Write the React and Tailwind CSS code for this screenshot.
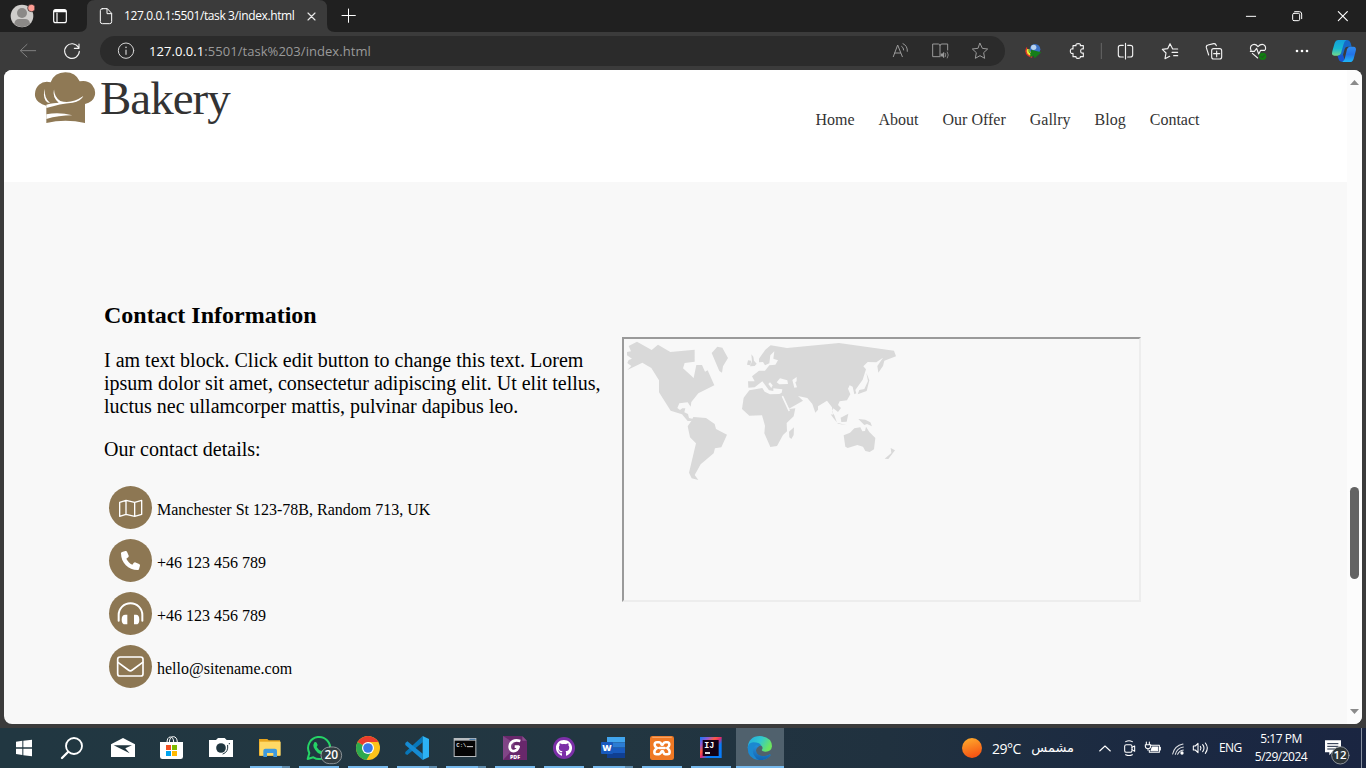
import React from "react";
import { FaPhone, FaGithub } from "react-icons/fa6";

const Pic = ({ box, children, className = "" }) => {
  const [x, y, w, h] = box;
  return (
    <svg className={`shrink-0 ${className}`} width={w / 3} height={h / 3} viewBox={`${x} ${y} ${w} ${h}`} fill="none" strokeLinecap="round" strokeLinejoin="round">
      {children}
    </svg>
  );
};

function TabBar() {
  return (
    <div className="flex h-8 shrink-0 bg-[#202020]">
      <Pic box={[0, 0, 237, 96]}>
        <circle cx="66" cy="48" r="34" fill="#cfcdcb" />
        <circle cx="66" cy="39" r="15" fill="#8b8987" />
        <path d="M43 72 Q44 57 58 57 H75 Q89 57 90 72 Q66 92 43 72Z" fill="#8b8987" />
        <circle cx="94" cy="24" r="11" fill="#ff9d94" stroke="#202020" strokeWidth="2" />
        <rect x="161" y="29" width="38" height="39" rx="6" stroke="#fff" strokeWidth="3.5" />
        <path d="M161 34 Q161 29 166 29 H194 Q199 29 199 35 V37 H161Z" fill="#fff" />
        <path d="M171 39 V67" stroke="#fff" strokeWidth="3.5" />
      </Pic>
      <Pic box={[237, 0, 135, 96]}>
        <path d="M237 96 Q261 96 261 72 V24 Q261 0 285 0 H372 V96Z" fill="#3b3b3b" />
        <path d="M307 26 H322 L335 40 V65 Q335 71 329 71 H307 Q301 71 301 65 V32 Q301 26 307 26Z M321 27 V41 H334" stroke="#fff" strokeWidth="3" />
      </Pic>
      <div className="flex w-[176px] items-center whitespace-nowrap bg-[#3b3b3b] font-['Open_Sans',sans-serif] text-[12px] tracking-[-0.38px] text-white">
        127.0.0.1:5501/task 3/index.html
      </div>
      <Pic box={[900, 0, 240, 96]}>
        <path d="M900 0 H957 Q981 0 981 24 V72 Q981 96 1005 96 H900Z" fill="#3b3b3b" />
        <path d="M924 39 L945 60 M945 39 L924 60" stroke="#e8e8e8" strokeWidth="3.500" />
        <path d="M1026 46.500 H1066 M1045.500 27 V67" stroke="#fff" strokeWidth="3" />
      </Pic>
      <div className="flex-1" />
      <Pic box={[1140, 0, 378, 96]}>
        <path d="M1159 49 H1187" stroke="#fff" strokeWidth="3" />
        <rect x="1298" y="40" width="21" height="22" rx="4" stroke="#fff" strokeWidth="3" />
        <path d="M1304 35 H1318 Q1325 35 1325 42 V56" stroke="#fff" strokeWidth="3" />
        <path d="M1435 35 L1462 62 M1462 35 L1435 62" stroke="#fff" strokeWidth="3.500" />
      </Pic>
    </div>
  );
}

function Toolbar() {
  return (
    <div className="flex h-[38px] shrink-0 bg-[#3b3b3b]">
      <Pic box={[0, 96, 300, 114]}>
        <path d="M107 152 H62 M81 133 L61 152 L81 171" stroke="#808080" strokeWidth="3" />
        <path d="M235 142 A22 22 0 1 0 238 154 M237 132 V145 H223" stroke="#f4f4f4" strokeWidth="3.4" />
      </Pic>
      <div className="mt-1 flex h-[30px] w-[905px] items-center rounded-full bg-[#2b2b2b]">
        <Pic box={[300, 109, 147, 90]}>
          <circle cx="378" cy="153" r="23" stroke="#d6d6d6" strokeWidth="3" />
          <path d="M378 151 V164" stroke="#d6d6d6" strokeWidth="3.5" />
          <circle cx="378" cy="143" r="2.4" fill="#d6d6d6" />
        </Pic>
        <div className="flex-1 whitespace-nowrap pt-px font-['Open_Sans',sans-serif] text-[13px] tracking-[0.05px] text-[#9a9a9a]">
          <span className="text-white">127.0.0.1</span>:5501/task%203/index.html
        </div>
        <Pic box={[75, 109, 360, 90]}>
          <g stroke="#9a9a9a" strokeWidth="3">
            <path d="M100 171 L113 136 L127 171 M104 160 H122 M125 140 Q131 143 131 151 M129 132 Q143 138 142 155" />
            <path d="M240 171 H218 V133 H235 Q240 133 240 138 Q240 133 246 133 H263 V151 M240 138 V168" />
            <path d="M243 162 H247 L252 157 V175 L247 170 H243Z" fill="#9a9a9a" strokeWidth="1" />
            <path d="M256 161 Q259 165 256 171 M262 157 Q268 166 262 175" strokeWidth="2.4" />
            <path d="M360 131 L367 146 L383 148 L371 159 L374 176 L360 168 L346 176 L349 159 L337 148 L353 146Z" />
          </g>
        </Pic>
      </div>
      <Pic box={[435, 96, 1083, 114]}>
        <path d="M498 146 A19 19 0 0 0 516 170 L518 150Z" fill="#eee535" />
        <path d="M500 144 Q492 164 515 171" stroke="#e53427" strokeWidth="4" />
        <path d="M507 150 Q506 160 516 163" stroke="#18902d" strokeWidth="3" />
        <circle cx="525" cy="148" r="16" fill="#3b70c4" />
        <circle cx="521" cy="142" r="8" fill="#b7d2ef" />
        <path d="M513 149 L544 157 L524 175 L521 167 L510 171Z" fill="#167d1a" />
        <g stroke="#f2f2f2" strokeWidth="3.4">
          <path d="M639 137 H648 Q646 131 655 131 Q663 131 661 137 H670 V147 Q662 145 662 153 Q662 161 670 159 V170 H661 Q662 175 655 175 Q647 175 648 170 H639 V160 Q631 162 631 153 Q631 145 639 147Z" />
          <path d="M724 130 V176" stroke="#666" strokeWidth="3" />
          <path d="M790 136 H782 Q775 136 775 142 V165 Q775 171 782 171 H790 M803 136 H811 Q818 136 818 142 V165 Q818 171 811 171 H803 M796.500 130 V177" />
          <path d="M938 147 L930 131 L923 146 L907 148 L918 159 L915 176 L929 169 M938 147 H953 M936 157 H953 M941 167 H953" />
          <path d="M1046 165 L1039 143 Q1038 136 1044 135 L1061 131 Q1067 130 1069 137" />
          <rect x="1055" y="146" width="30" height="31" rx="6" /><path d="M1070 153 V170 M1061 161 H1079" />
          <path d="M1173 151 Q1168 139 1178 134 Q1187 131 1194 140 Q1202 131 1211 134 Q1219 139 1216 149 M1177 160 L1193 174 M1171 154 H1183 L1190 145 L1196 162 L1202 151 H1214" />
        </g>
        <circle cx="1208" cy="169" r="11" fill="#107c10" /><path d="M1203 169 L1207 173 L1213 166" stroke="#333" strokeWidth="2" />
        <g fill="#fff"><circle cx="1311" cy="153" r="4" /><circle cx="1326" cy="153" r="4" /><circle cx="1341" cy="153" r="4" /></g>
        <defs>
          <linearGradient id="cpA" x1="0" y1="0" x2="0" y2="1"><stop stopColor="#139fda" /><stop offset=".55" stopColor="#18b9d1" /><stop offset="1" stopColor="#72d98a" /></linearGradient>
          <linearGradient id="cpB" x1="0" y1="0" x2="0" y2="1"><stop stopColor="#2f8cf0" /><stop offset=".5" stopColor="#2373e8" /><stop offset="1" stopColor="#1eb5f5" /></linearGradient>
        </defs>
        <path d="M1449 120 H1462 Q1469 120 1472 129 L1475 140 H1463 Q1456 140 1454 147 L1448 168 H1437 L1446 129Z" fill="#1669c8" />
        <path d="M1432 166 H1450 L1455 186 H1449 Q1438 186 1436 178Z" fill="#1654cf" />
        <path d="M1434 120 H1459 Q1453 123 1451 132 L1443 160 Q1440 167 1432 167 H1423 Q1413 167 1417 154 L1424 129 Q1427 120 1434 120Z" fill="url(#cpA)" />
        <path d="M1470 140 H1480 Q1491 140 1487 154 L1481 176 Q1478 186 1470 186 H1447 Q1453 182 1455 173 L1461 148 Q1463 140 1470 140Z" fill="url(#cpB)" />
      </Pic>
    </div>
  );
}

function Logo() {
  return (
    <div className="flex">
      <Pic box={[102, 213, 198, 162]}>
        <path d="M152 247 Q163 217 196 217 Q227 217 239 244 Q262 239 276 254 Q289 270 284 288 Q279 306 255 312 V369 Q196 356 139 369 V317 Q111 310 106 292 Q101 270 117 254 Q131 242 152 247Z" fill="#8f7955" />
        <path d="M134 266 Q132 293 150 309 Q142 309 137 302 Q128 288 134 266Z M162 268 Q163 292 181 303 Q214 313 250 288 Q243 304 218 308 Q180 311 139 324 V314 Q150 311 160 310 Q168 309 176 308 Q156 292 162 268Z M139 343 Q178 336 217 346 Q176 346 139 357Z" fill="#fff" />
      </Pic>
      <div className="h-14 whitespace-nowrap font-['Liberation_Serif',serif] text-[47px] leading-[54px] tracking-[-1px] text-[#333]">Bakery</div>
    </div>
  );
}

function WorldMap() {
  return (
    <Pic box={[27, 27, 873, 453]}>
      <g fill="#d9d9d9">
        <path d="M66 35 L110 60 L129 44 L166 66 L239 59 V95 L209 99 L204 115 L236 144 L244 105 H261 L270 125 L278 121 L298 166 L250 190 L229 216 L227 230 L218 217 L193 220 L187 234 L195 240 L202 235 L211 235 L208 247 L219 252 L222 264 L235 267 L229 273 L218 273 L201 253 L167 242 L132 187 V151 L109 114 L82 98 L37 120 L49 108 L37 99 L41 90 L51 86 L36 76 V66 L48 64 L41 48Z" />
        <path d="M235 261 L273 264 L299 282 L303 297 L336 314 L319 352 L300 355 L296 370 L257 403 L239 435 L250 450 L230 445 L222 428 L243 340 L225 322 L218 289 L229 273Z" />
        <path d="M307 50 L322 53 L339 84 L324 109 L321 128 L313 123 L290 69Z" />
        <path d="M409 73 L415 80 L417 92 L425 101 L419 108 L405 109 L411 94Z M399 91 L409 92 L406 106 L396 104Z" />
        <path d="M432 86 L451 59 L467 46 L516 54 L672 39 L837 62 L843 79 L808 92 L804 108 L790 128 L787 108 L804 83 L784 97 L758 96 L745 109 L753 118 L743 149 L728 170 L721 180 L724 190 L718 193 L713 170 L704 166 L699 176 L706 193 L696 211 L674 214 L669 225 L678 234 L669 246 L655 235 L651 246 L658 256 L666 278 L696 286 L669 281 L655 264 L647 253 L654 254 L651 232 L636 212 L609 229 V239 L601 248 L592 222 L577 204 L549 198 L564 212 L522 236 L504 200 L522 237 L541 235 L536 259 L515 279 L516 304 L504 315 L486 348 L466 351 L448 310 L450 287 L441 256 L403 257 L381 237 L386 203 L403 181 L442 174 L449 185 L465 193 L493 192 L500 188 L502 178 L475 175 L475 183 L462 181 L442 154 L419 172 L400 173 L399 154 L419 154 L411 139 L432 122 H450 L463 106 L481 104 L489 91 L475 86 L478 64 L466 76 L463 100 L450 106 L444 96 L432 97Z" />
        <path d="M522 305 L537 292 L536 315 L529 327 L523 322Z M677 263 L700 251 L695 275 L679 276Z M730 267 L751 269 L766 277 L771 289 L756 282 L748 285Z" />
        <path d="M686 316 L705 308 L718 295 L736 292 L742 304 L750 303 L753 290 L763 306 L781 324 L777 358 L764 366 L751 363 L744 350 L727 345 L698 354 L691 350Z M827 354 L840 361 L820 387 L809 386 L829 369Z M754 128 L763 151 L755 183 L728 193 L733 180 L748 177 L759 153Z" />
      </g>
      <path d="M485 157 L495 145 L517 151 L519 162 L493 163Z M532 150 L545 141 V154 L541 157 L546 172 L538 173Z M465 157 L473 166 L469 174 L460 162Z" fill="#f8f8f8" />
      <path d="M503 200 L522 241" stroke="#f8f8f8" strokeWidth="5" />
    </Pic>
  );
}

const contacts = [
  ["Manchester St 123-78B, Random 713, UK", "map"],
  ["+46 123 456 789", "phone"],
  ["+46 123 456 789", "headphones"],
  ["hello@sitename.com", "mail"],
];

function ContactIcon({ kind }) {
  return (
    <div className="flex size-[43px] items-center justify-center rounded-full bg-[#8d7753] text-white">
      {kind === "map" && <Pic box={[57, 33, 129, 129]}><path d="M89 82 L108 76 L134 82 L155 76 V118 L134 124 L108 118 L89 124Z M108 76 V118 M134 82 V124" stroke="#fff" strokeWidth="4" /></Pic>}
      {kind === "phone" && <FaPhone className="size-[19px]" />}
      {kind === "headphones" && <Pic box={[57, 351, 129, 129]}><path d="M86 437 V420 A35.500 35.500 0 0 1 157 420 V437" stroke="#fff" strokeWidth="6" /><path d="M112 419 V448 H106 Q95 448 95 434 Q95 419 106 419Z M132 419 V448 H138 Q148 448 148 434 Q148 419 138 419Z" fill="#fff" /></Pic>}
      {kind === "mail" && <Pic box={[57, 510, 129, 129]}><rect x="83" y="546" width="76" height="57" rx="7" stroke="#fff" strokeWidth="5" /><path d="M84 562 L115 585 Q121 590 127 585 L158 562" stroke="#fff" strokeWidth="5" /></Pic>}
    </div>
  );
}

function Page() {
  return (
    <div className="flex h-[658px] shrink-0 bg-[#3b3b3b] px-1 pb-1">
      <div className="flex flex-1 overflow-hidden rounded-lg bg-[#f8f8f8]">
        <div className="flex w-[1343px] flex-col font-['Liberation_Serif',serif]">
          <header className="flex h-28 shrink-0 justify-between bg-white pl-[30px] pr-[147.5px] pt-px">
            <Logo />
            <nav className="flex gap-6 pt-10 text-[16px] leading-[18px] text-[#333]">
              {["Home", "About", "Our Offer", "Gallry", "Blog", "Contact"].map((t) => <a key={t}>{t}</a>)}
            </nav>
          </header>
          <main className="flex pl-[100px]">
            <section className="w-[518px] whitespace-nowrap pt-[120px] text-[20px] leading-[23px] text-black">
              <h2 className="text-[24px] font-bold leading-[27px]">Contact Information</h2>
              <p className="pt-5">
                I am text block. Click edit button to change this text. Lorem<br />
                ipsum dolor sit amet, consectetur adipiscing elit. Ut elit tellus,<br />
                luctus nec ullamcorper mattis, pulvinar dapibus leo.
              </p>
              <p className="pt-5">Our contact details:</p>
              <ul className="flex flex-col gap-[10px] pl-[5px] pt-[25px] text-[16px]">
                {contacts.map(([text, kind], i) => (
                  <li key={i} className="flex items-center gap-[5px]"><ContactIcon kind={kind} /><span className="pt-[3px]">{text}</span></li>
                ))}
              </ul>
            </section>
            <div className="mt-[155px] h-[265px] w-[519px] border-2 border-b-[#ededed] border-l-[#9a9a9a] border-r-[#ededed] border-t-[#9a9a9a]">
              <WorldMap />
            </div>
          </main>
        </div>
        <div className="flex w-[15px] flex-col items-center bg-[#fcfcfc]">
          <svg className="mt-2.5" width="15" height="5" viewBox="0 0 15 5"><path d="M3 5 L7.500 0 L12 5Z" fill="#8b8b8b" /></svg>
          <div className="mt-[402px] h-[92px] w-[9px] rounded-full bg-[#636363]" />
          <div className="flex-1" />
          <svg className="mb-2.5" width="15" height="5" viewBox="0 0 15 5"><path d="M3 0 L7.500 5 L12 0Z" fill="#8b8b8b" /></svg>
        </div>
      </div>
    </div>
  );
}

function TaskbarApp({ x, run, split, active, children }) {
  return (
    <div className={`relative h-10 w-[49px] shrink-0 ${active ? "bg-[linear-gradient(90deg,transparent_1px,#50616d_1px)]" : ""}`}>
      <Pic box={[x, 39, 147, 120]}>{children}</Pic>
      {run && <div className={`absolute bottom-0 flex h-0.5 ${active ? "left-px w-12" : "left-[5px] w-10"}`}><div className="flex-1 bg-[#76b9ed]" />{split && <div className="w-2 bg-[#5e8bac]" />}</div>}
    </div>
  );
}

function Taskbar() {
  return (
    <div className="flex h-10 shrink-0 bg-[linear-gradient(90deg,#213741_0%,#223641_45%,#20313f_65%,#1b2942_85%,#1a2541_100%)] font-['Open_Sans',sans-serif] text-white">
      <Pic box={[0, 39, 294, 120]}>
        <path d="M48 80 L67 77 V97 H48Z M70 77 L96 74 V97 H70Z M48 101 H67 V120 L48 117Z M70 101 H96 V124 L70 121Z" fill="#fff" />
        <circle cx="222" cy="93" r="24" stroke="#fff" strokeWidth="5.500" /><path d="M204 111 L186 129" stroke="#fff" strokeWidth="7" />
      </Pic>
      <TaskbarApp x={294}><path d="M333 88 L369 69 L405 88 V126 H333Z" fill="#fff" /><path d="M341 91 H396 L376 100 L389 115Z" fill="#21363f" /></TaskbarApp>
      <TaskbarApp x={441}>
        <path d="M480 81 H549 V125 Q549 132 542 132 H487 Q480 132 480 125Z" fill="#fff" />
        <path d="M501 81 Q502 66 511 66 Q520 66 521 80 M508 81 Q509 65 520 65 Q531 65 532 81" stroke="#fff" strokeWidth="3" />
        <path d="M498 90 H513 V105 H498Z" fill="#f25022" /><path d="M516 90 H531 V105 H516Z" fill="#7fba00" /><path d="M498 108 H513 V123 H498Z" fill="#00a4ef" /><path d="M516 108 H531 V123 H516Z" fill="#ffb900" />
      </TaskbarApp>
      <TaskbarApp x={588}><path d="M627 75 H648 L654 69 H674 L680 75 H699 V126 H627Z" fill="#fff" /><circle cx="663" cy="99" r="14.500" fill="#20363f" /><path d="M669 117 Q686 111 683 91" stroke="#20363f" strokeWidth="3" /><circle cx="688" cy="86" r="2" fill="#20363f" /></TaskbarApp>
      <TaskbarApp x={735} run split><path d="M777 72 H802 L806 76 H840 V122 H777Z" fill="#e8a51d" /><path d="M779 80 H842 V122 H779Z" fill="#ffd965" /><path d="M790 107 Q790 101 796 101 H825 Q831 101 831 107 V126 H820 V114 H801 V126 H790Z" fill="#3e9ade" /></TaskbarApp>
      <TaskbarApp x={882} run>
        <path d="M923 132 L928 114 A33 33 0 1 1 940 127Z" stroke="#25d366" strokeWidth="6" />
        <path d="M943 82 Q947 79 950 83 L953 90 L950 96 Q955 105 964 108 L969 104 L978 108 Q980 119 969 119 Q951 119 941 97 Q939 88 943 82Z" fill="#25d366" />
        <rect x="963" y="96" width="62" height="50" rx="25" fill="#333e43" stroke="#9da4a7" strokeWidth="2.500" />
        <text x="994" y="132" textAnchor="middle" fontFamily="Open Sans" fontWeight="600" fontSize="36" fill="#fff">20</text>
      </TaskbarApp>
      <TaskbarApp x={1029} run>
        <circle cx="1104" cy="99" r="36" fill="#fcc31b" />
        <path d="M1104 99 L1073 81 A36 36 0 0 0 1099 135 L1117 106Z" fill="#2da94f" /><path d="M1104 99 L1073 81 A36 36 0 0 1 1135 81 H1104Z" fill="#ea3c2d" />
        <circle cx="1104" cy="99" r="18" fill="#fff" /><circle cx="1104" cy="99" r="14.500" fill="#3978e8" />
      </TaskbarApp>
      <TaskbarApp x={6} run split>
        <path d="M98 63 V82 L52 120 L46 117 V111Z" fill="#0877b9" /><path d="M46 84 L52 79 L98 116 V135 L46 90Z" fill="#168bd2" /><path d="M98 63 L117 72 V126 L98 135Z" fill="#2cb2f4" />
      </TaskbarApp>
      <TaskbarApp x={153} run split>
        <path d="M191 69 H259 V126 H191Z" fill="#b8bdc0" /><path d="M194 77 H256 V123 H194Z" fill="#050505" /><path d="M240 73 H255" stroke="#4c7da8" strokeWidth="4" />
        <text x="199" y="96" fontFamily="Liberation Mono" fontWeight="700" fontSize="17" fill="#ddd" textLength="30">C:\</text><path d="M232 95 H248" stroke="#ddd" strokeWidth="3" />
      </TaskbarApp>
      <TaskbarApp x={300} run>
        <path d="M339 63 H395 L411 79 V135 H339Z" fill="#68286b" /><path d="M339 63 L373 85 L364 108 L339 135Z" fill="#804586" /><path d="M397 63 V77 H411Z" fill="#8b4b8c" />
        <path d="M391 78 Q370 72 361 86 Q355 103 367 108 Q382 110 386 95 H374" stroke="#fff" strokeWidth="8" strokeLinecap="butt" /><text x="375" y="131" textAnchor="middle" fontFamily="Open Sans" fontWeight="800" fontSize="16" fill="#fff">PDF</text>
      </TaskbarApp>
      <TaskbarApp x={447} run>
        <circle cx="522" cy="99" r="33" fill="#7c2fa8" />
        <svg x="497" y="74" width="50" height="50" viewBox="0 0 50 50" overflow="visible"><FaGithub size={50} color="#fff" /></svg>
      </TaskbarApp>
      <TaskbarApp x={594} run split><path d="M651 66 H705 V82 H651Z" fill="#41a5ee" /><path d="M651 82 H705 V98 H651Z" fill="#2b7cd3" /><path d="M651 98 H705 V114 H651Z" fill="#185abd" /><path d="M651 114 H705 V129 H651Z" fill="#103f91" /><rect x="633" y="81" width="36" height="36" rx="3" fill="#185abd" /><text x="651" y="109" textAnchor="middle" fontFamily="Open Sans" fontWeight="800" fontSize="27" fill="#fff">W</text></TaskbarApp>
      <TaskbarApp x={741} run><rect x="780" y="63" width="72" height="72" rx="7" fill="#ef7924" /><path d="M788 67 H844" stroke="#f9ad70" strokeWidth="3" /><path d="M801 82 H808 Q812 82 815 89 H818 Q821 82 826 82 H832 Q838 82 838 89 Q838 95 831 99 Q839 104 839 111 Q839 118 832 118 H826 Q822 118 819 109 H815 Q811 118 806 118 H800 Q793 118 793 111 Q793 104 802 99 Q794 95 794 89 Q794 82 801 82Z M808 99 H824" stroke="#fff" strokeWidth="7.500" /></TaskbarApp>
      <TaskbarApp x={888} run>
        <defs><linearGradient id="ij" x2="1" y2="1"><stop stopColor="#087cfa" /><stop offset=".2" stopColor="#8b59d8" /><stop offset=".38" stopColor="#fe5a40" /><stop offset=".5" stopColor="#df2871" /><stop offset=".65" stopColor="#087cfa" /><stop offset="1" stopColor="#087cfa" /></linearGradient></defs>
        <path d="M930 66 H995 V129 H930Z" fill="url(#ij)" /><path d="M938 75 H986 V123 H938Z" fill="#120015" />
        <text x="943" y="98" fontFamily="Liberation Mono" fontWeight="700" fontSize="25" fill="#fff">IJ</text><path d="M945 111 H960 V117 H945Z" fill="#ddd" />
      </TaskbarApp>
      <TaskbarApp x={1035} run active>
        <defs><linearGradient id="edA" x2="1" y2=".4"><stop stopColor="#23a8e0" /><stop offset=".55" stopColor="#31c8ce" /><stop offset="1" stopColor="#6be560" /></linearGradient><linearGradient id="edB" y2="1" x2="0"><stop stopColor="#258dd8" /><stop offset="1" stopColor="#1263b0" /></linearGradient></defs>
        <path d="M1073 99 Q1075 64 1110 63 Q1145 66 1146 94 Q1144 111 1125 110 Q1116 109 1115 105 Q1121 98 1114 92 Q1096 74 1073 99Z" fill="url(#edA)" />
        <path d="M1073 99 Q1075 83 1090 82 Q1108 82 1114 92 Q1098 91 1097 107 Q1100 124 1120 124 Q1131 124 1140 118 Q1143 121 1139 124 Q1127 137 1105 135 Q1073 131 1073 99Z" fill="#1b88d0" />
        <path d="M1098 91 Q1081 104 1094 124 Q1098 132 1107 135 Q1128 137 1139 124 Q1143 121 1140 118 Q1130 124 1120 124 Q1099 122 1098 106 Q1099 98 1107 94Z" fill="url(#edB)" />
      </TaskbarApp>
      <div className="flex-1" />
      <Pic box={[90, 84, 96, 120]}>
        <defs><linearGradient id="sun" x2=".3" y2="1"><stop stopColor="#ffb02e" /><stop offset="1" stopColor="#f55614" /></linearGradient></defs>
        <circle cx="126" cy="144" r="30" fill="url(#sun)" />
      </Pic>
      <div className="flex w-[38px] items-center text-[14px] tracking-[-0.5px]">29°C</div>
      <div dir="rtl" className="flex w-[45px] items-center justify-start whitespace-nowrap pr-px font-['DejaVu_Sans',sans-serif] text-[13px]">مشمس</div>
      <Pic box={[435, 84, 432, 120]}>
        <g stroke="#fff" strokeWidth="3.2">
          <path d="M509 153 L525 138 L541 153" /><rect x="584" y="134" width="22" height="23" rx="5" /><path d="M606 142 L614 138 V154 L606 149 M587 125 Q597 119 607 125 M587 164 Q597 169 607 164" />
          <path d="M662 136 H688 V157 H658 V151 M691 142 V150" /><path d="M649 126 V133 M658 126 V133 M646 134 H662 V139 Q661 146 654 146 Q647 146 646 139Z M654 146 V151" /><path d="M667 141 H683 V152 H663Z" fill="#fff" />
          <path d="M728 162 A39 39 0 0 1 759 132 M736 163 A30 30 0 0 1 760 141 M743 163 A22 22 0 0 1 760 150" opacity=".85" /><circle cx="756" cy="159" r="5" fill="#fff" stroke="none" />
          <path d="M790 138 H796 L804 130 V158 L796 150 H790Z M811 139 Q815 144 811 150 M818 134 Q826 144 818 155 M826 129 Q838 144 826 160" />
        </g>
      </Pic>
      <div className="flex w-[35px] items-center text-[12px] tracking-[-0.6px]">ENG</div>
      <div className="flex w-[54px] flex-col items-center pt-0.5 text-[12px] leading-[18px] tracking-[-0.5px]"><span>5:17 PM</span><span className="whitespace-nowrap">5/29/2024</span></div>
      <Pic box={[1134, 84, 174, 120]}>
        <path d="M1185 121 H1233 V157 H1206 L1198 166 V157 H1185Z" fill="#fff" /><path d="M1193 131 H1224 M1193 139 H1224 M1193 147 H1215" stroke="#1b2841" strokeWidth="3" />
        <circle cx="1231" cy="166" r="26" fill="#2c3438" stroke="#a1a6aa" strokeWidth="2.500" /><text x="1230" y="178" textAnchor="middle" fontFamily="Open Sans" fontWeight="600" fontSize="34" fill="#fff">12</text>
        <path d="M1294.500 84 V204" stroke="#8790a0" strokeWidth="3" />
      </Pic>
    </div>
  );
}

export default function App() {
  return (
    <div className="flex h-[768px] w-[1366px] flex-col overflow-hidden">
      <TabBar /><Toolbar /><Page /><Taskbar />
    </div>
  );
}
